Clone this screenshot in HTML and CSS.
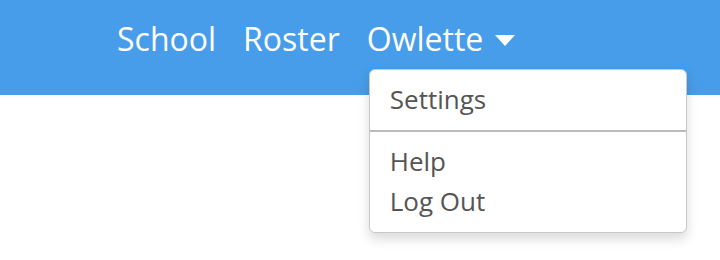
FILE: index.html
```html
<!DOCTYPE html>
<html lang="en">
<head>
    <meta charset="UTF-8">
    <title>Owlette</title>
    <link rel="stylesheet" href="styles.css">
</head>
<body>
    <header class="topbar">
        <nav class="nav">
            <a class="nav-link" href="#">School</a>
            <a class="nav-link" href="#">Roster</a>
            <div class="nav-dropdown">
                <a class="nav-link dropdown-toggle" href="#">Owlette <span class="caret"></span></a>
                <ul class="dropdown-menu">
                    <li><a href="#">Settings</a></li>
                    <li class="divider"></li>
                    <li><a href="#">Help</a></li>
                    <li><a href="#">Log Out</a></li>
                </ul>
            </div>
        </nav>
    </header>
</body>
</html>
```

FILE: styles.css
```css
:root {
    --color-primary: #479de9;
    --color-text: #555;
}
html, body {
    height: 100%;
}
body {
    margin: 0;
    min-height: 260px;
    font-family: 'Open Sans', sans-serif;
    background: #fff;
}
.topbar {
    position: relative;
    z-index: 5;
    background-color: var(--color-primary);
    height: 95px;
}
.nav {
    display: flex;
    gap: 27px;
    padding: 19px 0 0 117px;
}
.nav-link {
    color: #fff;
    text-decoration: none;
    font-size: 32px;
    line-height: 40px;
}
.nav-dropdown {
    position: relative;
}
.caret {
    display: inline-block;
    width: 0;
    height: 0;
    margin-left: 3px;
    margin-bottom: 4px;
    vertical-align: middle;
    border-top: 11px solid #fff;
    border-left: 10px solid transparent;
    border-right: 10px solid transparent;
}
.dropdown-menu {
    position: absolute;
    z-index: 10;
    top: 50px;
    left: 2px;
    width: 316px;
    margin: 0;
    padding: 9px 0 11px;
    list-style: none;
    background: #fff;
    border: 1px solid #c8c8c8;
    border-radius: 6px;
    box-shadow: 0 6px 12px rgba(0, 0, 0, 0.15);
}
.dropdown-menu a {
    display: block;
    padding: 0 20px;
    color: var(--color-text);
    text-decoration: none;
    font-size: 26px;
    line-height: 40px;
}
.dropdown-menu .divider {
    height: 2px;
    margin: 11px 0 9px;
    background: #bbb;
}
```
